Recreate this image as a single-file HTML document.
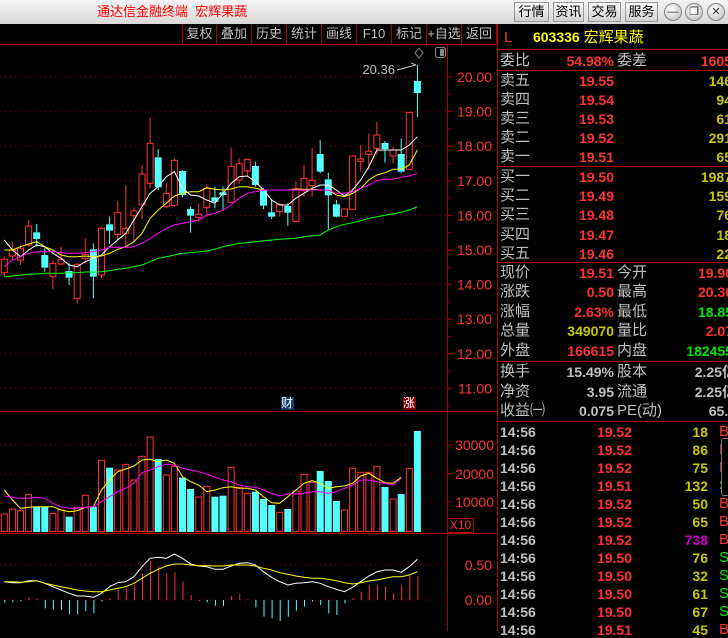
<!DOCTYPE html>
<html><head><meta charset="utf-8"><style>
*{margin:0;padding:0;box-sizing:border-box}
body{width:728px;height:631px;overflow:hidden;background:#000;position:relative;font-family:"Liberation Sans","Noto Sans CJK SC",sans-serif}
.a{position:absolute;white-space:nowrap;line-height:1}
.top{position:absolute;left:0;top:0;width:728px;height:24px;background:linear-gradient(#f4f4f4,#d8d8d8)}
.btn{position:absolute;top:2px;height:20px;border:1px solid #999;background:linear-gradient(#fafafa,#d0d0d0);font-size:13px;color:#000;text-align:center;line-height:18px}
.cir{position:absolute;top:3px;width:18px;height:18px;border-radius:50%;border:1px solid #888;background:radial-gradient(circle at 40% 35%,#fff,#bbb);font-size:11px;text-align:center;line-height:16px;color:#333}
.tb{position:absolute;top:24px;height:20px;color:#c0c0c0;font-size:13px;line-height:20px;text-align:center;border-left:1px solid #a00000}
.l{color:#c0c0c0;font-size:15px}
.r{color:#ff3232}.y{color:#c8c800}.g{color:#00e600}.w{color:#c0c0c0}.m{color:#d000d0}
.n{font-size:14px;font-weight:bold;text-align:right}
.hl{position:absolute;height:1px;background:#b00000}
</style></head><body>
<div class="top"></div>
<div class="a" style="left:97px;top:5px;font-size:13px;color:#f00">通达信金融终端&nbsp; 宏辉果蔬</div>
<div class="btn" style="left:514px;width:35px">行情</div>
<div class="btn" style="left:553px;width:31px">资讯</div>
<div class="btn" style="left:588px;width:33px">交易</div>
<div class="btn" style="left:625px;width:33px">服务</div>
<div class="cir" style="left:664px">—</div>
<div class="cir" style="left:685px">❐</div>
<div class="cir" style="left:707px">✕</div>

<div class="tb" style="left:182px;width:34px">复权</div>
<div class="tb" style="left:216px;width:35px">叠加</div>
<div class="tb" style="left:251px;width:35px">历史</div>
<div class="tb" style="left:286px;width:35px">统计</div>
<div class="tb" style="left:321px;width:35px">画线</div>
<div class="tb" style="left:356px;width:35px">F10</div>
<div class="tb" style="left:391px;width:35px">标记</div>
<div class="tb" style="left:426px;width:35px">+自选</div>
<div class="tb" style="left:461px;width:36px;border-right:1px solid #a00000">返回</div>
<div class="hl" style="left:0;top:44px;width:498px"></div>

<svg id="sv" width="498" height="631" style="position:absolute;left:0;top:0"></svg>

<div class="a" style="left:281px;top:397px;width:13px;height:13px;background:#123a6a;color:#fff;font-size:12px">财</div>
<div class="a" style="left:403px;top:397px;width:13px;height:13px;background:#800000;color:#fff;font-size:12px">涨</div>
<div class="a" style="left:447px;top:518px;width:27px;height:15px;border:1px solid #b00000;color:#ff3232;font-size:12px;line-height:13px;text-align:center">X10</div>

<!-- right panel -->
<div style="position:absolute;left:497px;top:24px;width:1px;height:607px;background:#b00000"></div>
<div class="a" style="left:504px;top:30px;font-size:15px;color:#ff3232">L</div>
<div class="a" style="left:533px;top:30px;font-size:14px;font-weight:bold;color:#ffff00">603336 <span style="font-weight:normal;font-size:15px">宏辉果蔬</span></div>
<div class="hl" style="left:498px;top:49px;width:230px"></div>
<div id="rp"></div>

<script>
var s='';
function L(x1,y1,x2,y2,c,extra){s+='<line x1="'+x1+'" y1="'+y1+'" x2="'+x2+'" y2="'+y2+'" stroke="'+c+'" '+(extra||'')+'/>';}
function T(x,y,t,c,sz,anc){s+='<text x="'+x+'" y="'+y+'" fill="'+c+'" font-size="'+(sz||14)+'" font-family="Liberation Sans" '+(anc?'text-anchor="'+anc+'"':'')+'>'+t+'</text>';}
var R='#ff3232',C='#54ffff';
// axes
L(447.5,44,447.5,631,'#b00000');
L(0,411.5,498,411.5,'#b00000');
L(0,533.5,498,533.5,'#b00000');
for(var k=0;k<10;k++){var y=77+k*34.6;L(0,y,447,y,'#900000','stroke-dasharray="1,4"');T(492,y+5,(20-k).toFixed(2),R,14,'end');L(447,y,452,y,'#b00000');L(447,y+17.3,450,y+17.3,'#b00000');}
[[445,'30000'],[474,'20000'],[502,'10000']].forEach(function(a){L(0,a[0],447,a[0],'#900000','stroke-dasharray="1,4"');T(494,a[0]+5,a[1],R,14,'end');L(447,a[0],452,a[0],'#b00000');});
L(0,565,447,565,'#900000','stroke-dasharray="1,4"');T(492,570,'0.50',R,14,'end');
L(0,600,447,600,'#900000','stroke-dasharray="1,4"');T(492,605,'0.00',R,14,'end');
function X(i){return 4.3+i*8.1;}
function Y(z){return 90+z/3;}
var cd=[['r',508,548,500,558],['r',480,498,455,512],['r',475,510,465,525],['r',408,465,390,470],['c',427,447,402,470],['c',495,533,470,545],['r',520,560,512,597],['r',508,522,470,525],['c',543,563,520,585],['r',523,625,520,640],['r',493,505,445,520],['c',478,560,460,625],['r',415,555,410,565],['c',403,422,380,462],['r',367,433,333,450],['r',415,430,285,470],['r',363,377,352,455],['r',252,345,225,388],['r',160,280,83,295],['c',202,292,177,300],['r',310,350,280,355],['r',211,346,205,350],['c',243,315,240,322],['c',357,377,350,428],['r',373,382,340,395],['r',295,352,283,380],['c',322,335,290,355],['c',307,315,290,362],['r',229,337,173,340],['r',221,270,205,282],['r',208,243,205,258],['c',228,285,215,290],['c',300,347,295,357],['c',367,380,327,387],['r',343,365,340,380],['c',348,368,340,407],['r',296,395,275,395],['r',265,302,225,320],['r',271,287,175,320],['c',192,245,150,250],['c',268,316,248,418],['c',343,380,330,382],['r',357,379,355,380],['r',198,358,195,358],['r',207,214,165,245],['r',184,193,130,240],['r',135,175,96,195],['c',159,177,153,218],['r',180,198,170,220],['c',192,245,145,250],['r',67,238,67,240],['c',-27,9,-76,81]];
cd.forEach(function(d,i){var x=X(i),c=d[0]=='r'?R:C;L(x,Y(d[3]),x,Y(d[1]),c);L(x,Y(d[2]),x,Y(d[4]),c);
var t=Y(d[1]),b=Y(d[2]);if(b-t<1)b=t+1;
if(d[0]=='r')s+='<rect x="'+(x-3)+'" y="'+t+'" width="6" height="'+(b-t)+'" fill="#000" stroke="'+R+'"/>';else s+='<rect x="'+(x-3.5)+'" y="'+t+'" width="7" height="'+(b-t)+'" fill="'+C+'"/>';});
function PL(a,c,f){var p=a.map(function(z,i){return X(i).toFixed(1)+','+f(z).toFixed(1);}).join(' ');s+='<polyline points="'+p+'" fill="none" stroke="'+c+'" stroke-width="1"/>';}
PL([450,480,500,480,465,470,490,505,525,530,515,505,495,470,450,430,390,350,310,290,260,245,295,315,318,330,340,310,280,260,258,275,300,330,345,345,325,310,295,285,285,300,318,300,270,230,180,180,180,180,165,140],'#fff',Y);
PL([480,480,470,462,455,470,480,495,500,500,498,500,498,490,478,470,455,430,385,360,340,318,310,305,305,293,298,300,297,290,290,295,300,300,300,300,298,298,298,300,300,315,320,310,295,270,255,248,238,238,225,180],'#ff0',Y);
PL([530,510,500,490,485,485,485,488,490,490,488,485,480,472,472,472,470,460,445,430,415,405,400,395,390,375,370,360,345,325,310,305,300,300,300,300,300,300,300,300,300,310,310,305,295,285,272,268,268,262,258,250],'#f0f',Y);
PL([560,558,555,553,552,550,550,550,548,548,546,546,545,542,538,535,530,525,515,505,500,495,490,488,485,483,478,470,465,460,458,455,452,450,448,446,445,440,437,435,420,410,403,398,392,385,380,376,372,367,360,350],'#0f0',Y);
// top annotation
T(395,74,'20.36','#c0c0c0',13,'end');L(397,70,412,66,'#c0c0c0');L(412,66,416,65,'#c0c0c0');L(411,63,416,65,'#c0c0c0');
s+='<path d="M419,48 L423,53 L419,58 L415,53Z" fill="none" stroke="#888"/>';
s+='<rect x="435.5" y="47.5" width="10" height="10" rx="2" fill="none" stroke="#888"/><rect x="440" y="49" width="4" height="7" fill="#888"/>';
// volume
function V(z){return 390+z/3;}
var vb=[['r',372],['r',357],['r',362],['r',313],['c',350],['c',350],['r',370],['r',360],['c',380],['r',352],['r',316],['c',350],['r',211],['c',233],['r',240],['r',223],['r',270],['r',199],['r',141],['c',207],['r',255],['r',229],['c',263],['c',297],['r',321],['r',289],['c',320],['c',317],['r',232],['r',292],['r',310],['c',305],['c',327],['c',345],['r',367],['c',357],['r',303],['r',253],['r',277],['c',243],['c',273],['c',333],['r',360],['r',235],['r',247],['r',247],['r',229],['c',291],['r',327],['c',312],['r',235],['c',123]];
vb.forEach(function(d,i){var x=X(i),t=V(d[1]),b=531.5;if(d[0]=='r')s+='<rect x="'+(x-3)+'" y="'+t+'" width="6" height="'+(b-t)+'" fill="none" stroke="'+R+'"/>';else s+='<rect x="'+(x-3.5)+'" y="'+t+'" width="7" height="'+(b+0.5-t)+'" fill="'+C+'"/>';});
var vy=[300,330,355,352,350,350,350,360,365,362,352,350,300,270,245,237,228,210,208,215,210,220,260,275,285,305,300,293,290,295,295,300,320,338,340,320,300,280,272,280,295,290,288,280,258,250,265,278,280,262];
var vm=[318,322,325,325,322,325,340,350,355,355,352,350,335,320,305,295,280,248,240,230,222,225,235,240,245,252,262,270,275,285,290,292,300,310,318,312,312,310,305,305,310,305,295,285,270,270,275,280,285,265];
PL(vy,'#ff0',V);PL(vm,'#f0f',V);
// macd
var mh=[638,637,633,622,625,655,658,660,673,673,663,670,635,625,600,595,585,550,512,530,550,547,575,615,632,637,647,648,618,612,628,652,680,685,693,680,662,650,635,645,670,675,640,625,605,585,585,590,610,585,558,558];
mh.forEach(function(z,i){var x=X(i)+0.5;L(x,V(630),x,V(z),z<630?R:C);});
PL([575,578,578,572,572,580,590,600,610,618,618,622,610,590,578,575,560,530,505,502,505,492,505,522,528,530,538,538,528,520,518,525,545,562,575,585,580,578,575,580,590,598,605,592,575,558,545,540,540,547,530,508],'#fff',V);
PL([575,575,577,575,572,580,585,590,595,600,603,605,605,600,595,590,580,565,550,538,528,522,522,525,527,527,528,528,525,525,525,528,535,540,548,553,558,562,565,565,568,572,578,582,578,573,570,565,560,560,555,545],'#ff0',V);
document.getElementById('sv').innerHTML=s;

// right panel
var h='';
function A(x,y,t,cls,w){h+='<div class="a '+cls+'" style="left:'+x+'px;top:'+y+'px'+(w?';width:'+w+'px':'')+'">'+t+'</div>';}
function RT(xr,y,t,cls){A(xr-120,y,t,cls+' n',120);}
function HL(y){h+='<div class="hl" style="left:498px;top:'+y+'px;width:230px"></div>';}
A(500,53,'委比','l');RT(614,54,'54.98%','r');A(617,53,'委差','l');RT(732,54,'1605','r');
HL(70);
var s5=[['卖五','19.55','146'],['卖四','19.54','94'],['卖三','19.53','61'],['卖二','19.52','291'],['卖一','19.51','65']];
s5.forEach(function(d,i){var y=73+i*19;A(500,y,d[0],'l');RT(614,y+1,d[1],'r');RT(732,y+1,d[2],'y');});
HL(166);
var b5=[['买一','19.50','1987'],['买二','19.49','159'],['买三','19.48','76'],['买四','19.47','18'],['买五','19.46','22']];
b5.forEach(function(d,i){var y=169+i*19.2;A(500,y,d[0],'l');RT(614,y+1,d[1],'r');RT(732,y+1,d[2],'y');});
HL(262);
var q=[['现价','19.51','r','今开','19.90','r'],['涨跌','0.50','r','最高','20.36','r'],['涨幅','2.63%','r','最低','18.85','g'],['总量','349070','y','量比','2.07','r'],['外盘','166615','r','内盘','182455','g']];
q.forEach(function(d,i){var y=265+i*19.4;A(500,y,d[0],'l');RT(614,y+1,d[1],d[2]);A(617,y,d[3],'l');RT(733,y+1,d[4],d[5]);});
HL(361);
var q2=[['换手','15.49%','股本','2.25亿'],['净资','3.95','流通','2.25亿'],['收益㈠','0.075','PE(动)','65.0']];
q2.forEach(function(d,i){var y=364+i*19.5;A(500,y,d[0],'l');RT(614,y+1,d[1],'w');A(617,y,d[2],'l');RT(736,y+1,d[3],'w');});
HL(421);
var tk=[['19.52','18','y','B'],['19.52','86','y','B'],['19.52','75','y','B'],['19.51','132','y','S'],['19.52','50','y','B'],['19.52','65','y','B'],['19.52','738','m','B'],['19.50','76','y','S'],['19.50','32','y','S'],['19.50','61','y','S'],['19.50','67','y','S'],['19.51','45','y','B']];
tk.forEach(function(d,i){var y=425+i*18;A(500,y,'14:56','w n');RT(632,y,d[0],'r');RT(708,y,d[1],d[2]);A(719,y-1,d[3],(d[3]=='B'?'r':'g'),0);});
h+='<div style="position:absolute;left:721px;top:438px;width:9px;height:58px;border:1px solid #777;border-radius:3px;background:#000"></div>';
document.getElementById('rp').innerHTML=h;
document.querySelectorAll('#rp .n').forEach(function(e){});
</script>
<style>#rp .a[style*="left:719px"]{font-size:15px}</style>
</body></html>
